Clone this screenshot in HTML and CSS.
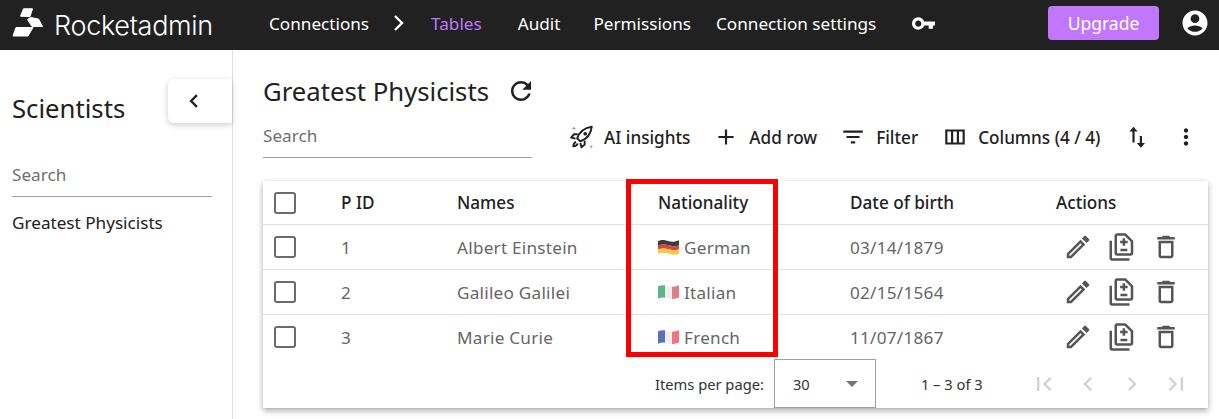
FILE: index.html
```html
<!DOCTYPE html>
<html lang="en">
<head>
    <meta charset="UTF-8">
    <title>Rocketadmin - Greatest Physicists</title>
    <link rel="stylesheet" href="styles.css">
</head>
<body>

<header class="topbar">
    <div class="logo">
        <svg class="logo-mark" viewBox="0 0 32 30"><path d="M11.500.8h9L18 8.600l-9.500-.4z"/><path d="M18.500 9.500l8 1.500 4 7.500H20l-4.500-7z"/><path d="M4 19.500h17l-5 8.500H1z"/></svg>
        <span class="logo-text">Rocketadmin</span>
    </div>
    <nav class="nav">
        <a class="nav-connections">Connections</a>
        <svg class="nav-chevron" viewBox="0 0 24 24"><path d="M9 5l7 7-7 7" fill="none" stroke="#fff" stroke-width="2.400"/></svg>
        <a class="nav-tables">Tables</a>
        <a class="nav-audit">Audit</a>
        <a class="nav-permissions">Permissions</a>
        <a class="nav-settings">Connection settings</a>
        <svg class="nav-key" viewBox="0 0 24 24"><path fill="#fff" d="M12.650 10C11.830 7.670 9.610 6 7 6c-3.310 0-6 2.690-6 6s2.690 6 6 6c2.610 0 4.830-1.670 5.650-4H17v3h4v-3h2v-4H12.650zM7 15c-1.650 0-3-1.350-3-3s1.350-3 3-3 3 1.350 3 3-1.350 3-3 3z"/></svg>
    </nav>
    <button class="upgrade">Upgrade</button>
    <svg class="account" viewBox="0 0 24 24"><path fill="#fff" d="M12 2C6.480 2 2 6.480 2 12s4.480 10 10 10 10-4.480 10-10S17.520 2 12 2zm0 3c1.930 0 3.500 1.570 3.500 3.500S13.930 12 12 12s-3.500-1.570-3.500-3.500S10.070 5 12 5zm0 14c-2.030 0-4.430-.820-6.140-2.880C7.550 14.800 9.680 14 12 14s4.450.800 6.140 2.120C16.430 18.180 14.030 19 12 19z"/></svg>
</header>

<div class="layout">
    <aside class="sidebar">
        <h2 class="sidebar-title">Scientists</h2>
        <button class="collapse-btn">
            <svg viewBox="0 0 24 24"><path d="M14.500 7l-5 5 5 5" fill="none" stroke="#212121" stroke-width="2"/></svg>
        </button>
        <div class="sidebar-search">Search</div>
        <a class="sidebar-link">Greatest Physicists</a>
    </aside>

    <main class="content">
        <div class="title-row">
            <h1>Greatest Physicists</h1>
            <svg class="refresh" viewBox="0 0 24 24"><path fill="#212121" d="M17.650 6.350C16.200 4.900 14.210 4 12 4c-4.420 0-7.990 3.580-7.990 8s3.570 8 7.990 8c3.730 0 6.840-2.550 7.730-6h-2.080c-.820 2.330-3.040 4-5.650 4-3.310 0-6-2.690-6-6s2.690-6 6-6c1.660 0 3.140.690 4.220 1.780L13 11h7V4l-2.350 2.350z"/></svg>
        </div>

        <div class="toolbar">
            <div class="table-search">Search</div>
            <div class="actions">
                <button class="tool tool-ai">
                    <svg class="icon-26" viewBox="0 0 24 24">
                        <path d="M7.500 13.500C9 8 14 3.500 21 2.500c-.800 7-5.200 11.800-10.500 13.500z" fill="none" stroke="#212121" stroke-width="1.800" stroke-linejoin="round"/>
                        <circle cx="15" cy="9" r="1.700" fill="#212121"/>
                        <path d="M8 9.500H4.500L2 12.500l4 1M14.500 15.500V19l-3 2.500-1-4M6.500 16.500c-1.500.500-2.500 2-2.500 4 2 0 3.500-1 4-2.500" fill="none" stroke="#212121" stroke-width="1.800" stroke-linejoin="round"/>
                        <path d="M4.500 2l.500 1.500L6.500 4 5 4.500 4.500 6 4 4.500 2.500 4 4 3.500zM20.500 19l.500 1.500 1.500.500-1.500.500-.500 1.500-.500-1.500-1.500-.500 1.500-.500z" fill="#c177fc"/>
                    </svg>
                    AI insights
                </button>
                <button class="tool tool-add">
                    <svg class="icon-26" viewBox="0 0 24 24"><path fill="#212121" d="M19 13h-6v6h-2v-6H5v-2h6V5h2v6h6v2z"/></svg>
                    Add row
                </button>
                <button class="tool tool-filter">
                    <svg class="icon-26" viewBox="0 0 24 24"><path fill="#212121" d="M10 18h4v-2h-4v2zM3 6v2h18V6H3zm3 7h12v-2H6v2z"/></svg>
                    Filter
                </button>
                <button class="tool tool-columns">
                    <svg class="icon-26" viewBox="0 0 24 24"><path fill="#212121" d="M3 5v14h18V5H3zm5.330 12H5V7h3.330v10zm5.340 0h-3.340V7h3.340v10zM19 17h-3.330V7H19v10z"/></svg>
                    Columns (4 / 4)
                </button>
                <svg class="icon-26 tool-sort" viewBox="0 0 24 24"><path fill="#212121" d="M9.700 2.500L13.500 7h-2.800v10h-2V7H5.900zM16.500 22l-3.800-4.500h2.800V11h2v6.500h2.800z"/></svg>
                <svg class="icon-26 tool-more" viewBox="0 0 24 24"><path fill="#212121" d="M12 8c1.100 0 2-.9 2-2s-.9-2-2-2-2 .9-2 2 .9 2 2 2zm0 2c-1.100 0-2 .9-2 2s.9 2 2 2 2-.9 2-2-.9-2-2-2zm0 6c-1.100 0-2 .9-2 2s.9 2 2 2 2-.9 2-2-.9-2-2-2z"/></svg>
            </div>
        </div>

        <section class="card">
            <div class="row head">
                <div class="cell"><span class="check"></span></div>
                <div class="cell">P ID</div>
                <div class="cell">Names</div>
                <div class="cell">Nationality</div>
                <div class="cell">Date of birth</div>
                <div class="cell">Actions</div>
            </div>

            <div class="row">
                <div class="cell"><span class="check"></span></div>
                <div class="cell">1</div>
                <div class="cell">Albert Einstein</div>
                <div class="cell">
                    <svg class="flag" viewBox="0 1 21 14" preserveAspectRatio="none"><path fill="#3b3b3b" d="M0 3c4-2 7-1 11 0s7 0 10-1v4.500c-3 1-6 1-10 0s-7-1-11 0z"/><path fill="#d9473f" d="M0 6.500c4-1 7-1 11 0s7 1 10 0V10c-3 1-6 1-10 0s-7-1-11 0z"/><path fill="#f5c84b" d="M0 10c4-1 7-1 11 0s7 1 10 0v4c-3 1-6 1-10 0s-7-1-11 0z"/></svg>
                    German
                </div>
                <div class="cell">03/14/1879</div>
                <div class="cell cell-actions">
                    <svg class="act" viewBox="0 0 24 24"><use href="#i-edit"/></svg>
                    <svg class="act" viewBox="0 0 24 24"><use href="#i-dup"/></svg>
                    <svg class="act" viewBox="0 0 24 24"><use href="#i-del"/></svg>
                </div>
            </div>

            <div class="row">
                <div class="cell"><span class="check"></span></div>
                <div class="cell">2</div>
                <div class="cell">Galileo Galilei</div>
                <div class="cell">
                    <svg class="flag" viewBox="0 1 21 14" preserveAspectRatio="none"><path fill="#5fb585" d="M0 3c2.500-1 5-1.200 7-.800V13c-2-.4-4.500-.2-7 .8z"/><path fill="#f1eeee" d="M7 2.200c2 .3 5 1.300 7 1.200v10.800c-2 .1-5-.9-7-1.200z"/><path fill="#dc7f86" d="M14 3.400c2.500-.1 5-.6 7-1.400v10.800c-2 .8-4.500 1.300-7 1.400z"/></svg>
                    Italian
                </div>
                <div class="cell">02/15/1564</div>
                <div class="cell cell-actions">
                    <svg class="act" viewBox="0 0 24 24"><use href="#i-edit"/></svg>
                    <svg class="act" viewBox="0 0 24 24"><use href="#i-dup"/></svg>
                    <svg class="act" viewBox="0 0 24 24"><use href="#i-del"/></svg>
                </div>
            </div>

            <div class="row">
                <div class="cell"><span class="check"></span></div>
                <div class="cell">3</div>
                <div class="cell">Marie Curie</div>
                <div class="cell">
                    <svg class="flag" viewBox="0 1 21 14" preserveAspectRatio="none"><path fill="#5573bd" d="M0 3c2.500-1 5-1.200 7-.800V13c-2-.4-4.500-.2-7 .8z"/><path fill="#f1eeee" d="M7 2.200c2 .3 5 1.300 7 1.200v10.800c-2 .1-5-.9-7-1.200z"/><path fill="#ee7580" d="M14 3.400c2.500-.1 5-.6 7-1.400v10.800c-2 .8-4.500 1.300-7 1.400z"/></svg>
                    French
                </div>
                <div class="cell">11/07/1867</div>
                <div class="cell cell-actions">
                    <svg class="act" viewBox="0 0 24 24"><use href="#i-edit"/></svg>
                    <svg class="act" viewBox="0 0 24 24"><use href="#i-dup"/></svg>
                    <svg class="act" viewBox="0 0 24 24"><use href="#i-del"/></svg>
                </div>
            </div>

            <div class="pager">
                <span class="pager-label">Items per page:</span>
                <div class="pager-select">
                    <span>30</span>
                    <i class="caret"></i>
                </div>
                <span class="pager-range">1 – 3 of 3</span>
                <div class="pager-btns">
                    <svg viewBox="0 0 24 24"><path fill="#d2d2d2" d="M18.410 16.590L13.820 12l4.590-4.590L17 6l-6 6 6 6zM6 6h2v12H6z"/></svg>
                    <svg viewBox="0 0 24 24"><path fill="#d2d2d2" d="M15.410 7.410L14 6l-6 6 6 6 1.410-1.410L10.830 12z"/></svg>
                    <svg viewBox="0 0 24 24"><path fill="#d2d2d2" d="M10 6L8.590 7.410 13.170 12l-4.580 4.590L10 18l6-6z"/></svg>
                    <svg viewBox="0 0 24 24"><path fill="#d2d2d2" d="M5.590 7.410L10.180 12l-4.590 4.590L7 18l6-6-6-6zM16 6h2v12h-2z"/></svg>
                </div>
            </div>
        </section>
    </main>
</div>

<!-- red highlight drawn over the table -->
<div class="highlight"></div>

<svg class="sprites" width="0" height="0">
    <symbol id="i-edit" viewBox="0 0 24 24"><path d="M3 17.250V21h3.750L17.810 9.940l-3.750-3.750L3 17.250zM5.920 19H5v-.92l9.060-9.060.92.92L5.920 19zM20.710 5.630l-2.340-2.340c-.2-.2-.45-.29-.71-.29s-.51.1-.7.29l-1.830 1.830 3.750 3.750 1.830-1.830c.39-.39.39-1.020 0-1.410z"/></symbol>
    <symbol id="i-dup" viewBox="0 0 24 24"><path d="M18 23H4c-1.100 0-2-.9-2-2V7h2v14h14v2zM15 1H8c-1.100 0-1.990.9-1.990 2L6 17c0 1.100.89 2 1.990 2H19c1.100 0 2-.9 2-2V7l-6-6zm4 16H8V3h6.170L19 7.830V17z"/><path d="M10.750 13.300h5.500v2h-5.500zM12.500 11h2V9h2V7h-2V5h-2v2h-2v2h2z"/></symbol>
    <symbol id="i-del" viewBox="0 0 24 24"><path d="M6 19c0 1.100.9 2 2 2h8c1.100 0 2-.9 2-2V7H6v12zM8 9h8v10H8V9zm7.500-5l-1-1h-5l-1 1H5v2h14V4h-3.500z"/></symbol>
</svg>

</body>
</html>
```

FILE: styles.css
```css
/* page */
html, body {
    height: 100%;
}

body {
    margin: 0;
    font-family: "Noto Sans", sans-serif;
    font-size: 17.15px;
    color: #212121;
    background-color: #fff;
    overflow: hidden;
    position: relative;
}

button {
    font-family: inherit;
    border: none;
    background: none;
    padding: 0;
}

.icon-26 {
    width: 26px;
    height: 26px;
    flex: none;
}

.sprites {
    position: absolute;
}

/* top bar */
.topbar {
    height: 50px;
    padding-bottom: 4px;
    box-sizing: border-box;
    background-color: #212121;
    color: #fff;
    display: flex;
    align-items: center;
}

.logo {
    width: 269px;
    display: flex;
    align-items: center;
    padding-left: 12px;
    box-sizing: border-box;
    flex: none;
}

.logo-mark {
    width: 32px;
    height: 30px;
    fill: #fff;
    stroke: #fff;
    stroke-width: 1;
    stroke-linejoin: round;
}

.logo-text {
    font-family: Inter, sans-serif;
    font-weight: 300;
    font-size: 27px;
    letter-spacing: -0.3px;
    margin-left: 10px;
    position: relative;
    top: 2px;
}

.nav {
    display: flex;
    align-items: center;
    flex: 1;
    height: 100%;
}

.nav a {
    white-space: nowrap;
}

.nav-chevron {
    width: 24px;
    height: 24px;
    margin-left: 17px;
    flex: none;
}

.nav-tables {
    color: #c177fc;
    margin-left: 21px;
}

.nav-audit {
    margin-left: 36px;
}

.nav-permissions {
    margin-left: 33px;
}

.nav-settings {
    margin-left: 25px;
}

.nav-key {
    width: 25px;
    height: 25px;
    margin-left: 35px;
    flex: none;
}

.upgrade {
    width: 111px;
    height: 34px;
    background-color: #c177fc;
    color: #fff;
    font-size: 17.5px;
    border-radius: 4px;
    flex: none;
}

.account {
    width: 30px;
    height: 30px;
    margin: 0 9px 0 21px;
    flex: none;
}

/* sidebar + main */
.layout {
    display: flex;
    height: 369px;
}

.sidebar {
    width: 233px;
    box-sizing: border-box;
    border-right: 1px solid #e0e0e0;
    padding: 42px 20px 0 12px;
    position: relative;
    flex: none;
}

.sidebar-title {
    font-size: 25.7px;
    font-weight: 400;
    line-height: 34px;
    margin: 0;
}

.collapse-btn {
    position: absolute;
    left: 168px;
    top: 29px;
    width: 64px;
    height: 44px;
    background-color: #fff;
    border-radius: 6px 0 0 6px;
    box-shadow: 0 2px 6px rgba(0, 0, 0, 0.2);
    display: flex;
    align-items: center;
    padding-left: 12px;
    box-sizing: border-box;
}

.collapse-btn svg {
    width: 28px;
    height: 28px;
}

.sidebar-search {
    margin-top: 34px;
    height: 36px;
    line-height: 30px;
    color: #6f6f6f;
    border-bottom: 1px solid #9e9e9e;
}

.sidebar-link {
    display: block;
    margin-top: 14px;
    line-height: 24px;
}

.content {
    flex: 1;
    padding: 24px 11px 0 30px;
    min-width: 0;
}

.title-row {
    display: flex;
    align-items: center;
    height: 34px;
}

.title-row h1 {
    font-size: 25.7px;
    font-weight: 400;
    margin: 0 17px 0 0;
}

.refresh {
    width: 30px;
    height: 30px;
    flex: none;
}

.toolbar {
    display: flex;
    margin-top: 16px;
    height: 57px;
}

.table-search {
    width: 269px;
    box-sizing: border-box;
    height: 34px;
    padding-top: 1px;
    line-height: 22px;
    color: #6f6f6f;
    border-bottom: 1px solid #9e9e9e;
    flex: none;
}

.actions {
    display: flex;
    align-items: center;
    height: 26px;
    flex: 1;
}

.tool {
    display: flex;
    align-items: center;
    gap: 10px;
    font-size: 17.15px;
    font-weight: 500;
    color: #212121;
    white-space: nowrap;
}

.tool-ai {
    margin-left: 37px;
    gap: 9px;
}

.tool-add {
    margin-left: 23px;
}

.tool-filter {
    margin-left: 23px;
}

.tool-columns {
    margin-left: 24px;
}

.tool-sort {
    margin-left: 23px;
}

.tool-more {
    margin-left: 24px;
}

/* table card */
.card {
    background-color: #fff;
    box-shadow: 0 3px 6px rgba(0, 0, 0, 0.3), 0 0 3px rgba(0, 0, 0, 0.08);
    height: 227px;
}

.row {
    display: grid;
    grid-template-columns: 78px 116px 201px 192px 206px 152px;
    height: 45px;
    box-sizing: border-box;
    border-bottom: 1px solid #e0e0e0;
    color: #666;
    letter-spacing: 0.25px;
}

.row.head {
    height: 44px;
    color: #212121;
    font-weight: 500;
    letter-spacing: 0;
}

.cell {
    display: flex;
    align-items: center;
    white-space: nowrap;
}

.cell:first-child {
    padding-left: 11px;
}

.check {
    width: 22px;
    height: 22px;
    box-sizing: border-box;
    border: 2px solid #6b6b6b;
    border-radius: 3px;
}

.flag {
    width: 21px;
    height: 16px;
    margin-right: 5px;
    flex: none;
}

.cell-actions {
    gap: 14px;
    padding-left: 7px;
}

.act {
    width: 30px;
    height: 30px;
    fill: #555;
    flex: none;
}

.row:nth-last-child(2) {
    height: 44px;
    border-bottom: none;
}

/* pagination */
.pager {
    display: flex;
    align-items: center;
    height: 49px;
    font-size: 14.7px;
    color: #333;
}

.pager-label {
    margin-left: 392px;
}

.pager-select {
    width: 102px;
    height: 49px;
    box-sizing: border-box;
    border: 1px solid #a0a0a0;
    margin-left: 10px;
    padding: 0 18px;
    display: flex;
    align-items: center;
    justify-content: space-between;
    flex: none;
}

.caret {
    border-left: 6px solid transparent;
    border-right: 6px solid transparent;
    border-top: 6px solid #757575;
    margin-right: -1px;
}

.pager-range {
    margin-left: 45px;
}

.pager-btns {
    display: flex;
    gap: 16px;
    margin-left: 47px;
}

.pager-btns svg {
    width: 28px;
    height: 28px;
}

/* red box over the Nationality column */
.highlight {
    position: absolute;
    left: 626px;
    top: 179px;
    width: 152px;
    height: 178px;
    box-sizing: border-box;
    border: 5px solid #f00;
}
```
